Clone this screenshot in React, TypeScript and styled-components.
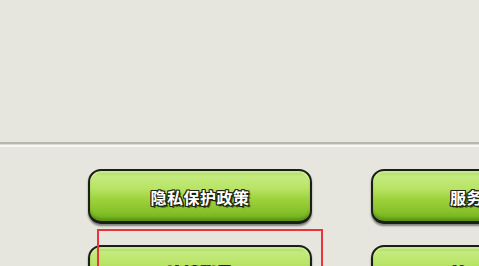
import React from 'react';
import styled, { createGlobalStyle } from 'styled-components';

const GlobalStyle = createGlobalStyle`
  html, body {
    margin: 0;
    padding: 0;
    background: #e6e6df;
    font-family: "Noto Sans CJK SC", "Liberation Sans", sans-serif;
    overflow: hidden;
  }
`;

interface MenuItem {
  label: string;
  focused?: boolean;
}

const items: MenuItem[] = [
  { label: '隐私保护政策' },
  { label: '服务协议' },
  { label: '注销账号', focused: true },
  { label: '关于我们' },
];

/**
 * 设置页：顶部空白区 + 分隔线 + 绿色按钮网格
 */
const App: React.FC = () => {
  return (
    <>
      <GlobalStyle />
      <Page>
        <TopArea />
        <Divider />
        <ButtonGrid>
          {items.map((item) => (
            <Cell key={item.label}>
              <GreenButton type="button">
                <Label>{item.label}</Label>
              </GreenButton>
              {item.focused && <FocusBox />}
            </Cell>
          ))}
        </ButtonGrid>
      </Page>
    </>
  );
};

const Page = styled.div`
  width: 479px;
  height: 266px;
  overflow: hidden;
  display: flex;
  flex-direction: column;
  background: #e6e6df;
`;

const TopArea = styled.div`
  height: 142px;
  flex-shrink: 0;
`;

// 深色线 + 浅色高光线
const Divider = styled.div`
  height: 2px;
  flex-shrink: 0;
  background: #b7b6af;
  border-bottom: 1px solid #dcdcd4;
  box-shadow: 0 2px 0 #f7f7f2;
`;

const ButtonGrid = styled.div`
  display: grid;
  grid-template-columns: 224px 224px;
  grid-auto-rows: 55px;
  column-gap: 59px;
  row-gap: 21px;
  padding: 24px 0 0 88px;
`;

const Cell = styled.div`
  position: relative;
`;

const GreenButton = styled.button`
  width: 100%;
  height: 100%;
  box-sizing: border-box;
  border: 2px solid #1c1f16;
  border-bottom-width: 3px;
  border-radius: 13px;
  padding: 0;
  display: flex;
  align-items: center;
  justify-content: center;
  cursor: pointer;
  background: linear-gradient(
    to bottom,
    #a4d948 0%,
    #c4eb7e 10%,
    #b8e465 35%,
    #9fd33e 55%,
    #88c32b 80%,
    #6dac1b 100%
  );
  box-shadow:
    inset 0 2px 0 rgba(255, 255, 255, 0.35),
    inset 0 -3px 2px rgba(60, 110, 10, 0.35),
    0 2px 2px rgba(0, 0, 0, 0.45);
`;

const Label = styled.span`
  font-family: "Noto Sans CJK SC", "Liberation Sans", sans-serif;
  font-size: 16px;
  font-weight: 700;
  letter-spacing: 0.5px;
  color: #ffffff;
  margin-top: 1px;
  text-shadow:
    1px 0 0 #1b2410,
    -1px 0 0 #1b2410,
    0 1px 0 #1b2410,
    0 -1px 0 #1b2410,
    1px 1px 0 #1b2410,
    -1px -1px 0 #1b2410,
    1px -1px 0 #1b2410,
    -1px 1px 0 #1b2410,
    2px 2px 1px rgba(0, 0, 0, 0.7);
`;

// 焦点红框，覆盖在按钮之上
const FocusBox = styled.div`
  position: absolute;
  left: 9px;
  top: -16px;
  width: 226px;
  height: 90px;
  box-sizing: border-box;
  border: 2px solid #e8343a;
  pointer-events: none;
`;

export default App;
